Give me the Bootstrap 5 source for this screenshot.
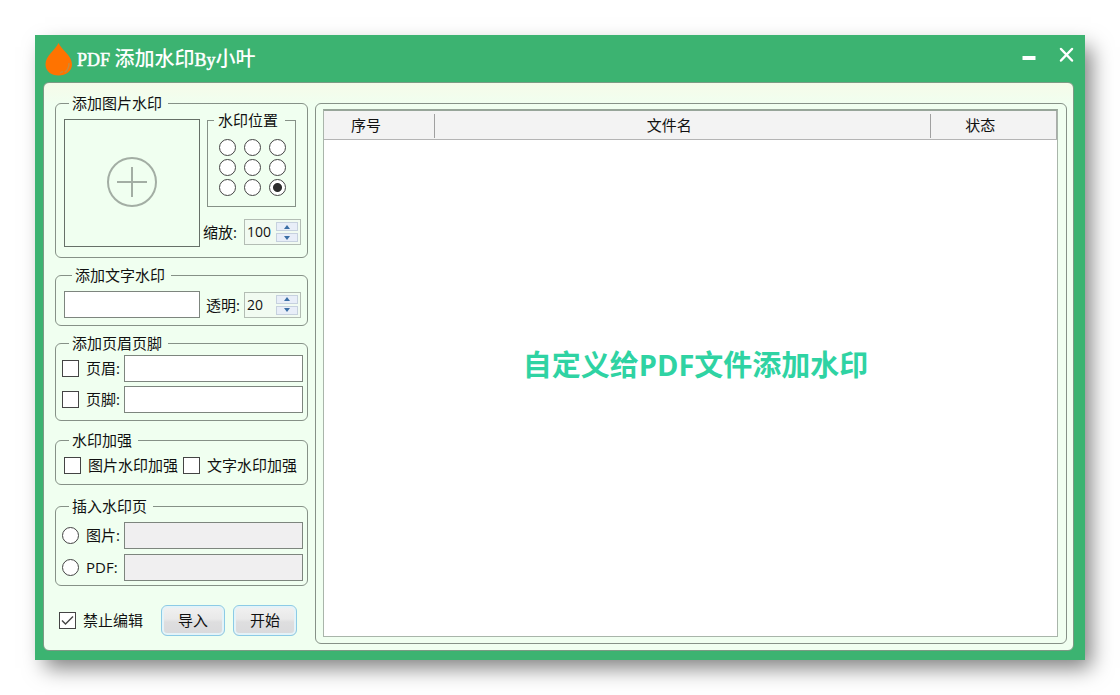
<!DOCTYPE html>
<html lang="zh-CN">
<head>
<meta charset="utf-8">
<meta name="viewport" content="width=device-width, initial-scale=1">
<title>PDF添加水印By小叶</title>
<link href="https://cdn.jsdelivr.net/npm/bootstrap@5.3.0/dist/css/bootstrap.min.css" rel="stylesheet">
<style>
  body { font: 15px/16px "Open Sans", "Noto Sans CJK SC", sans-serif; color: #111; background: #fff; }
  .page { min-height: 100vh; padding: 35px; }
  .app-window { background: #3cb371; padding: 0 11px 9px 8px; box-shadow: 8px 10px 20px -2px rgba(0,0,0,.5); }
  .title-bar { height: 47px; padding-left: 2px; color: #fff; }
  .app-title { font: 500 20px/24px "Noto Sans CJK SC", sans-serif; margin: 0 0 0 4px; }
  .app-title span { font-family: "Liberation Serif", serif; font-size: 18px; font-weight: 400; -webkit-text-stroke: .5px #fff; }
  .win-btn { background: none; border: 0; padding: 0; line-height: 0; margin-left: 20px; }
  .client { background: linear-gradient(#f6fbe9, #f0fff0 22px); border: 1px solid #7d9a85; border-radius: 6px; padding: 12px 6px 6px 11px; }
  .side { width: 253px; flex: none; }
  fieldset.group { border: 1px solid #869187; border-radius: 6px; }
  .group > legend { float: none; width: auto; font-size: 15px; line-height: 16px; margin: 0 0 0 5px; padding: 0 6px 0 3px; }
  .g-image { padding: 0 6px 10px 8px; }
  .g-text { padding: 0 6px 7px 8px; margin-top: 9px; }
  .g-head { padding: 0 4px 7px 6px; margin-top: 9px; }
  .g-boost { padding: 0 4px 5px 8px; margin-top: 11px; }
  .g-insert { padding: 0 4px 4px 6px; margin-top: 13px; }
  .g-text > legend { margin-left: 8px; }
  .g-head > legend, .g-insert > legend { margin-left: 7px; }
  .picker { width: 136px; height: 128px; margin-top: 8px; background: transparent; border: 1px solid #667068; padding: 0; flex: none; }
  .image-side { padding: 1px 0 0 3px; }
  fieldset.place { width: 89px; margin-left: 4px; border-radius: 0; padding: 11px 0 10px 11px; }
  .place > legend { margin-left: -5px; padding: 0 7px 0 4px; }
  .place-grid { display: grid; grid-template-columns: repeat(3, 17px); gap: 3px 8px; }
  .tick { appearance: none; width: 17px; height: 17px; margin: 0; flex: none; background: #fff; border: 1px solid #444; display: block; }
  .tick[type=radio] { border-radius: 50%; }
  .tick[type=radio]:checked { background: radial-gradient(circle, #2c2c2c 4px, #fff 5px); }
  .tick[type=checkbox]:checked { background: #fff url("data:image/svg+xml,%3Csvg xmlns='http://www.w3.org/2000/svg' viewBox='0 0 15 15'%3E%3Cpath d='M2 7.5 5.5 11 13 3.5' fill='none' stroke='%23444' stroke-width='1.4'/%3E%3C/svg%3E"); }
  .tick-label { padding: 0 5px 2px 7px; }
  .edit { height: 27px; min-width: 0; border: 1px solid #7d857e; border-radius: 0; background: #fff; padding: 0 4px; }
  .edit:disabled { background: #f0eff0; }
  .text-edit { width: 136px; }
  .spin { width: 57px; height: 26px; border: 1px solid #b3bdb4; background: #f1fbf1; flex: none; margin-left: auto; padding-right: 2px; }
  .spin input { width: 30px; border: 0; background: none; padding: 0 0 0 2px; font-size: 14px; line-height: 16px; color: #111; }
  .spin-keys { display: grid; gap: 2px; }
  .spin button { width: 22px; height: 9px; border: 1px solid #c6d1de; background: #e8eef8; padding: 0; line-height: 0; display: flex; align-items: center; justify-content: center; }
  .field-rows { display: grid; grid-template-columns: minmax(0, 1fr); gap: 4px; }
  .g-insert .field-rows { gap: 5px; }
  .row-label { width: 45px; flex: none; padding: 0 0 2px 7px; }
  .field-row { height: 27px; }
  .aero { width: 64px; height: 31px; border: 1px solid #8ccbe6; border-radius: 6px; padding: 0 0 2px; color: #111; background: linear-gradient(#f1f1f1, #e9e9e9 45%, #dededf 55%, #dadadc); box-shadow: inset 0 0 0 2px #e4f3f8; }
  .foot { margin-top: 19px; padding: 0 11px 0 4px; }
  .list-frame { min-width: 0; border: 1px solid #869187; border-radius: 6px; margin: 8px 0 0 7px; padding: 5px 8px 6px 7px; }
  .file-list { border: 1px solid #a9b5aa; border-top: 2px solid #97a599; background: #fff; }
  .file-table { width: 100%; table-layout: fixed; border-right: 1px solid #a9adaa; }
  .file-table th { height: 28px; padding: 2px 0 0; background: #f3f3f3; border-bottom: 1px solid #b4b4b4; font-weight: 400; }
  .file-table th div { height: 24px; line-height: 22px; padding-right: 26px; text-align: center; border-right: 1px solid #a0a0a0; }
  .file-table th:last-child div { border-right: 0; }
  .col-no { width: 111px; } .col-state { width: 126px; }
  .banner { font-size: 29px; line-height: 36px; font-weight: 700; color: #2fd3a3; padding: 0 0 45px 10px; }
</style>
</head>
<body>
<div class="page d-flex">
<div class="app-window flex-grow-1 d-flex flex-column">
  <header class="title-bar d-flex align-items-center">
    <svg width="28" height="34" viewBox="0 0 28 34" aria-hidden="true">
      <path d="M13.5 1C10.5 8 .5 13.500.5 22.500.5 29 6 33.500 13.500 33.500S27 29 27 22.500C27 13.500 16.500 8 13.500 1Z" fill="#ff7300"/>
      <path d="M24 21.500c0 3.500-1 6-3.800 8.300M17.500 29.800l-2 .8" fill="none" stroke="#c98a3c" stroke-width="1.500" stroke-linecap="round"/>
    </svg>
    <h1 class="app-title"><span>PDF</span><span> </span>添加水印<span>By</span>小叶</h1>
    <div class="ms-auto d-flex align-items-center pb-2">
      <button class="win-btn" type="button" aria-label="最小化"><svg width="14" height="16" viewBox="0 0 14 16"><path d="M.5 11h13" stroke="#fff" stroke-width="4"/></svg></button>
      <button class="win-btn" type="button" aria-label="关闭"><svg width="18" height="16" viewBox="0 0 18 16"><path d="M5 2l11 11.500M16 2 5 13.500" stroke="#fff" stroke-width="2.500" stroke-linecap="round"/></svg></button>
    </div>
  </header>
  <main class="client flex-grow-1 d-flex">
    <form class="side">
      <fieldset class="group g-image">
        <legend>添加图片水印</legend>
        <div class="d-flex">
          <button class="picker" type="button" aria-label="选择图片">
            <svg width="52" height="52" viewBox="0 0 52 52"><g fill="none" stroke="#a3aea4" stroke-width="2"><circle cx="26" cy="25" r="24"/><path d="M26 10v30M11 25h30"/></g></svg>
          </button>
          <div class="image-side flex-grow-1">
            <fieldset class="group place">
              <legend>水印位置</legend>
              <div class="place-grid">
                <input class="tick" type="radio" name="place" aria-label="左上">
                <input class="tick" type="radio" name="place" aria-label="中上">
                <input class="tick" type="radio" name="place" aria-label="右上">
                <input class="tick" type="radio" name="place" aria-label="左中">
                <input class="tick" type="radio" name="place" aria-label="居中">
                <input class="tick" type="radio" name="place" aria-label="右中">
                <input class="tick" type="radio" name="place" aria-label="左下">
                <input class="tick" type="radio" name="place" aria-label="中下">
                <input class="tick" type="radio" name="place" aria-label="右下" checked>
              </div>
            </fieldset>
            <div class="d-flex align-items-center mt-2 pt-1">
              <label for="scale">缩放:</label>
              <div class="spin d-flex align-items-center justify-content-between">
                <input id="scale" type="text" value="100">
                <div class="spin-keys">
                  <button type="button" aria-label="增加缩放"><svg width="6" height="4"><path d="M0 4 3 0l3 4z" fill="#3a6ea5"/></svg></button>
                  <button type="button" aria-label="减少缩放"><svg width="6" height="4"><path d="M0 0h6L3 4z" fill="#3a6ea5"/></svg></button>
                </div>
              </div>
            </div>
          </div>
        </div>
      </fieldset>

      <fieldset class="group g-text">
        <legend>添加文字水印</legend>
        <div class="d-flex align-items-center pt-2">
          <input class="edit text-edit" type="text" aria-label="文字水印">
          <label class="ms-auto" for="alpha">透明:</label>
          <div class="spin ms-1 d-flex align-items-center justify-content-between">
            <input id="alpha" type="text" value="20">
            <div class="spin-keys">
              <button type="button" aria-label="增加透明"><svg width="6" height="4"><path d="M0 4 3 0l3 4z" fill="#3a6ea5"/></svg></button>
              <button type="button" aria-label="减少透明"><svg width="6" height="4"><path d="M0 0h6L3 4z" fill="#3a6ea5"/></svg></button>
            </div>
          </div>
        </div>
      </fieldset>

      <fieldset class="group g-head">
        <legend>添加页眉页脚</legend>
        <div class="field-rows mt-1">
          <div class="field-row d-flex align-items-center">
            <input class="tick" type="checkbox" id="head"><label class="row-label" for="head">页眉:</label>
            <input class="edit flex-grow-1" type="text" aria-label="页眉">
          </div>
          <div class="field-row d-flex align-items-center">
            <input class="tick" type="checkbox" id="foot"><label class="row-label" for="foot">页脚:</label>
            <input class="edit flex-grow-1" type="text" aria-label="页脚">
          </div>
        </div>
      </fieldset>

      <fieldset class="group g-boost">
        <legend>水印加强</legend>
        <div class="field-row d-flex align-items-center mt-1">
          <input class="tick" type="checkbox" id="boost-image"><label class="tick-label" for="boost-image">图片水印加强</label>
          <input class="tick" type="checkbox" id="boost-text"><label class="tick-label pe-0" for="boost-text">文字水印加强</label>
        </div>
      </fieldset>

      <fieldset class="group g-insert">
        <legend>插入水印页</legend>
        <div class="field-rows pt-2">
          <div class="field-row d-flex align-items-center">
            <input class="tick" type="radio" name="insert" id="ins-image"><label class="row-label" for="ins-image">图片:</label>
            <input class="edit flex-grow-1" type="text" aria-label="图片" disabled>
          </div>
          <div class="field-row d-flex align-items-center">
            <input class="tick" type="radio" name="insert" id="ins-pdf"><label class="row-label" for="ins-pdf">PDF:</label>
            <input class="edit flex-grow-1" type="text" aria-label="PDF" disabled>
          </div>
        </div>
      </fieldset>

      <div class="foot d-flex align-items-center">
        <input class="tick" type="checkbox" id="lock" checked><label class="tick-label" for="lock">禁止编辑</label>
        <div class="d-flex gap-2 ms-auto">
          <button class="aero" type="button">导入</button>
          <button class="aero" type="button">开始</button>
        </div>
      </div>
    </form>

    <section class="list-frame flex-grow-1 d-flex">
      <div class="file-list flex-grow-1 d-flex flex-column">
        <table class="file-table">
          <thead><tr>
            <th class="col-no" scope="col"><div>序号</div></th>
            <th scope="col"><div>文件名</div></th>
            <th class="col-state" scope="col"><div>状态</div></th>
          </tr></thead>
        </table>
        <div class="banner flex-grow-1 d-flex align-items-center justify-content-center">自定义给PDF文件添加水印</div>
      </div>
    </section>
  </main>
</div>
</div>
<script src="https://cdn.jsdelivr.net/npm/bootstrap@5.3.0/dist/js/bootstrap.bundle.min.js"></script>
</body>
</html>
